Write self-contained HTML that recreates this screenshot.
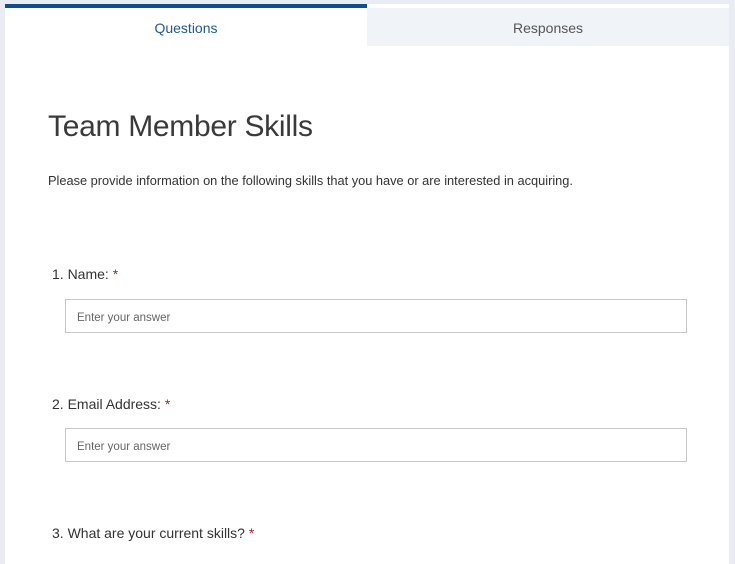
<!DOCTYPE html>
<html><head><style>
body{margin:0;width:735px;height:559px;background:#e9edf3;font-family:"Liberation Sans",sans-serif;overflow:hidden;position:relative}
.card{position:absolute;left:5px;top:4px;width:724px;height:560px;background:#fff}
.tabA{position:absolute;left:0;top:0;width:362px;height:4px;background:#0f4e8a}
.tabB{position:absolute;left:362px;top:4px;width:362px;height:38px;background:#f0f3f7;color:#555;font-size:14px;text-align:center;line-height:40px}
.tabQ{position:absolute;left:0;top:4px;width:362px;height:38px;color:#1e5a96;font-size:14px;text-align:center;line-height:40px}
.t{position:absolute;left:43px;top:106px;font-size:30px;color:#3a3a3a;font-weight:300;letter-spacing:-0.3px}
.d{position:absolute;left:43px;top:169px;font-size:12.8px;color:#333}
.q{position:absolute;left:47px;font-size:14px;color:#333}
.q span{color:#a4262c}
.in{position:absolute;left:60px;width:622px;height:34px;border:1px solid #c8c8c8;box-sizing:border-box;font-size:11.5px;color:#666;padding-left:11px;padding-top:3px;line-height:31px}
</style></head><body>
<div class="card">
<div class="tabA"></div>
<div class="tabQ">Questions</div>
<div class="tabB">Responses</div>
<div class="t">Team Member Skills</div>
<div class="d">Please provide information on the following skills that you have or are interested in acquiring.</div>
<div class="q" style="top:262px">1. Name: <span>*</span></div>
<div class="in" style="top:295px">Enter your answer</div>
<div class="q" style="top:392px">2. Email Address: <span>*</span></div>
<div class="in" style="top:424px">Enter your answer</div>
<div class="q" style="top:521px">3. What are your current skills? <span>*</span></div>
</div>
</body></html>
